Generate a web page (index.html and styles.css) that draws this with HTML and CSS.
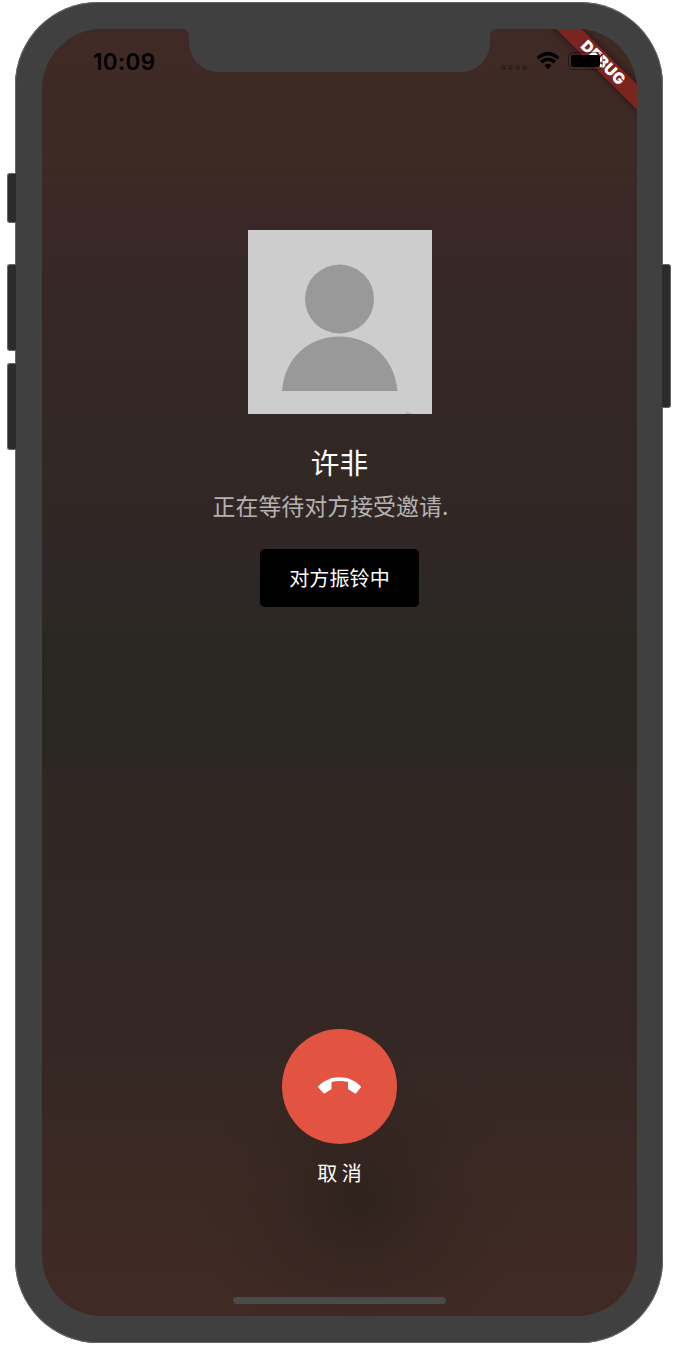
FILE: index.html
```html
<!DOCTYPE html>
<html lang="zh-CN">
<head>
<meta charset="utf-8">
<title>通话邀请</title>
<link rel="stylesheet" href="styles.css">
</head>
<body>
<div class="device">
  <span class="side-key mute"></span>
  <span class="side-key volume-up"></span>
  <span class="side-key volume-down"></span>
  <span class="side-key power"></span>
  <main class="screen">
    <svg class="notch" width="315" height="43" viewBox="0 0 315 43" aria-hidden="true">
      <path d="M0 0H315C310 0 308 3 308 8V13C308 30 295 43 279 43H37C20 43 7 30 7 13V8C7 3 5 0 0 0Z"/>
    </svg>
    <div class="banner">DEBUG</div>
    <header class="status-bar">
      <time class="clock">10:09</time>
      <div class="indicators">
        <span class="cellular"><i></i><i></i><i></i><i></i></span>
        <svg class="wifi" width="24" height="18" viewBox="0 0 24 18" aria-hidden="true">
          <path d="M1.6 6.2Q12-3 22.4 6.2" />
          <path d="M5.1 10.1Q12 4.3 18.9 10.1" />
          <path class="dot" d="M8.3 13.3Q12 10.5 15.7 13.3L12 17.2Z" />
        </svg>
        <span class="battery"><i></i></span>
      </div>
    </header>
    <section class="callee">
      <svg class="avatar" width="184" height="184" viewBox="0 0 184 184" role="img" aria-label="头像">
        <rect width="184" height="184" fill="#cdcdcd"/>
        <circle cx="91.500" cy="69" r="34.5" fill="#999"/>
        <path d="M34 161C36.500 128 60.500 106.500 91.500 106.500S146.500 128 149.500 161Z" fill="#999"/>
        <path d="M157 184l2-1.500h3l2 1.500z" fill="#b0b0b0"/>
      </svg>
      <h1 class="name">许非</h1>
      <p class="progress">正在等待对方接受邀请.</p>
      <div class="toast">对方振铃中</div>
    </section>
    <footer class="controls">
      <button class="hangup" aria-label="取消">
        <svg width="43" height="17" viewBox="0 0 43 17" aria-hidden="true">
          <path d="M.4 9.300C5.500 3.500 13 .2 21.500 .2S37.500 3.500 42.600 9.300Q43.200 10 42.600 10.700L38.200 16Q37.500 16.800 36.600 16.200L30.700 12.500Q30 12 30 11.200V5.100Q21.500 2.900 13.500 5.100V11.200Q13.500 12 12.800 12.500L7 16.200Q6 16.800 5.300 16L.5 10.700Q-.2 10 .4 9.300Z"/>
        </svg>
      </button>
      <span class="cancel">取 消</span>
      <span class="home-indicator"></span>
    </footer>
  </main>
</div>
</body>
</html>
```
FILE: styles.css
```css
* {
  box-sizing: border-box;
}

body {
  margin: 0;
  padding: 2px 15px 3px 15px;
  background: #fff;
  font-family: "Noto Sans CJK SC", sans-serif;
}

.device {
  position: relative;
  width: 648px;
  height: 1341px;
  padding: 27px 26px 27px 27px;
  border-radius: 83px;
  background: #404040;
  box-shadow: inset 0 0 0 1px #666;
}

.side-key {
  position: absolute;
  left: -8px;
  width: 9px;
  border: 1px solid #666;
  border-right: 0;
  border-radius: 3px 0 0 3px;
  background: #2b2b2b;
}

.mute {
  top: 171px;
  height: 50px;
}

.volume-up {
  top: 262px;
  height: 87px;
}

.volume-down {
  top: 361px;
  height: 87px;
}

.power {
  top: 262px;
  left: 647px;
  height: 144px;
  border: 1px solid #666;
  border-left: 0;
  border-radius: 0 3px 3px 0;
}

.screen {
  position: relative;
  display: flex;
  flex-direction: column;
  justify-content: space-between;
  height: 1287px;
  overflow: hidden;
  border-radius: 59px / 61px;
  background:
    radial-gradient(circle 165px at 318px 1171px, rgba(33, 27, 24, 0.5), rgba(33, 27, 24, 0.22) 40%, rgba(33, 27, 24, 0.06) 75%, transparent),
    linear-gradient(#402a25 0, #3b2a24 145px, #3a2827 175px, #362825 270px, #322823 420px, #302625 510px, #2d2825 555px, #2a2722 640px, #2c2723 730px, #302625 750px, #312723 900px, #352824 1020px, #392825 1100px, #3c2924 1140px, #402a24 1287px);
}

.notch {
  position: absolute;
  top: 0;
  left: 140px;
  fill: #404040;
}

.banner {
  position: absolute;
  top: 25px;
  left: 491px;
  width: 140px;
  height: 18px;
  transform: rotate(45deg);
  background: #7b2420;
  box-shadow: 0 0 9px rgba(0, 0, 0, 0.5);
  color: #fff;
  font: 900 15.500px/18px Inter, sans-serif;
  letter-spacing: 0.3px;
  text-align: center;
}

.status-bar {
  position: relative;
  display: flex;
  justify-content: space-between;
  align-items: center;
  height: 64px;
  padding: 0 34px 0 51px;
}

.clock {
  margin-top: 2px;
  color: #000;
  font: 600 22.5px/26px Inter, sans-serif;
  letter-spacing: 0.35px;
}

.indicators {
  display: flex;
  align-items: center;
}

.cellular {
  display: flex;
  gap: 2px;
  margin: 12px 9px 0 0;
}

.cellular i {
  width: 5px;
  height: 5px;
  border-radius: 2px;
  background: #30211d;
}

.wifi {
  margin-right: 8px;
  fill: none;
  stroke: #000;
  stroke-width: 3.5;
}

.wifi .dot {
  fill: #000;
  stroke: none;
}

.battery {
  width: 35px;
  height: 18px;
  padding: 2px;
  border: 1px solid rgba(0, 0, 0, 0.4);
  border-radius: 5px;
}

.battery i {
  display: block;
  width: 29px;
  height: 12px;
  border-radius: 2px;
  background: #000;
}

.callee {
  display: flex;
  flex-direction: column;
  align-items: center;
  margin: 137px 0 auto;
}

.avatar {
  display: block;
}

.name {
  margin: 27px 0 0;
  color: #fff;
  font-size: 28.700px;
  font-weight: 400;
  line-height: 42px;
}

.progress {
  width: 254px;
  margin: 5px 0 0;
  color: #b5b2b1;
  font-size: 22.950px;
  line-height: 34px;
  white-space: nowrap;
}

.toast {
  width: 159px;
  height: 58px;
  margin-top: 27px;
  border-radius: 5px;
  background: #000;
  color: #fff;
  font-size: 20.100px;
  line-height: 58px;
  text-align: center;
}

.controls {
  display: flex;
  flex-direction: column;
  align-items: center;
}

.hangup {
  display: grid;
  place-items: center;
  width: 115px;
  height: 115px;
  padding: 0 0 2px;
  border: 0;
  border-radius: 50%;
  background: #e25341;
}

.hangup svg {
  fill: #fff;
}

.cancel {
  margin-top: 14px;
  color: #fff;
  font-size: 20px;
  line-height: 30px;
}

.home-indicator {
  width: 213px;
  height: 7px;
  margin: 109px 0 12px;
  border-radius: 4px;
  background: #4a4a4a;
}
```
